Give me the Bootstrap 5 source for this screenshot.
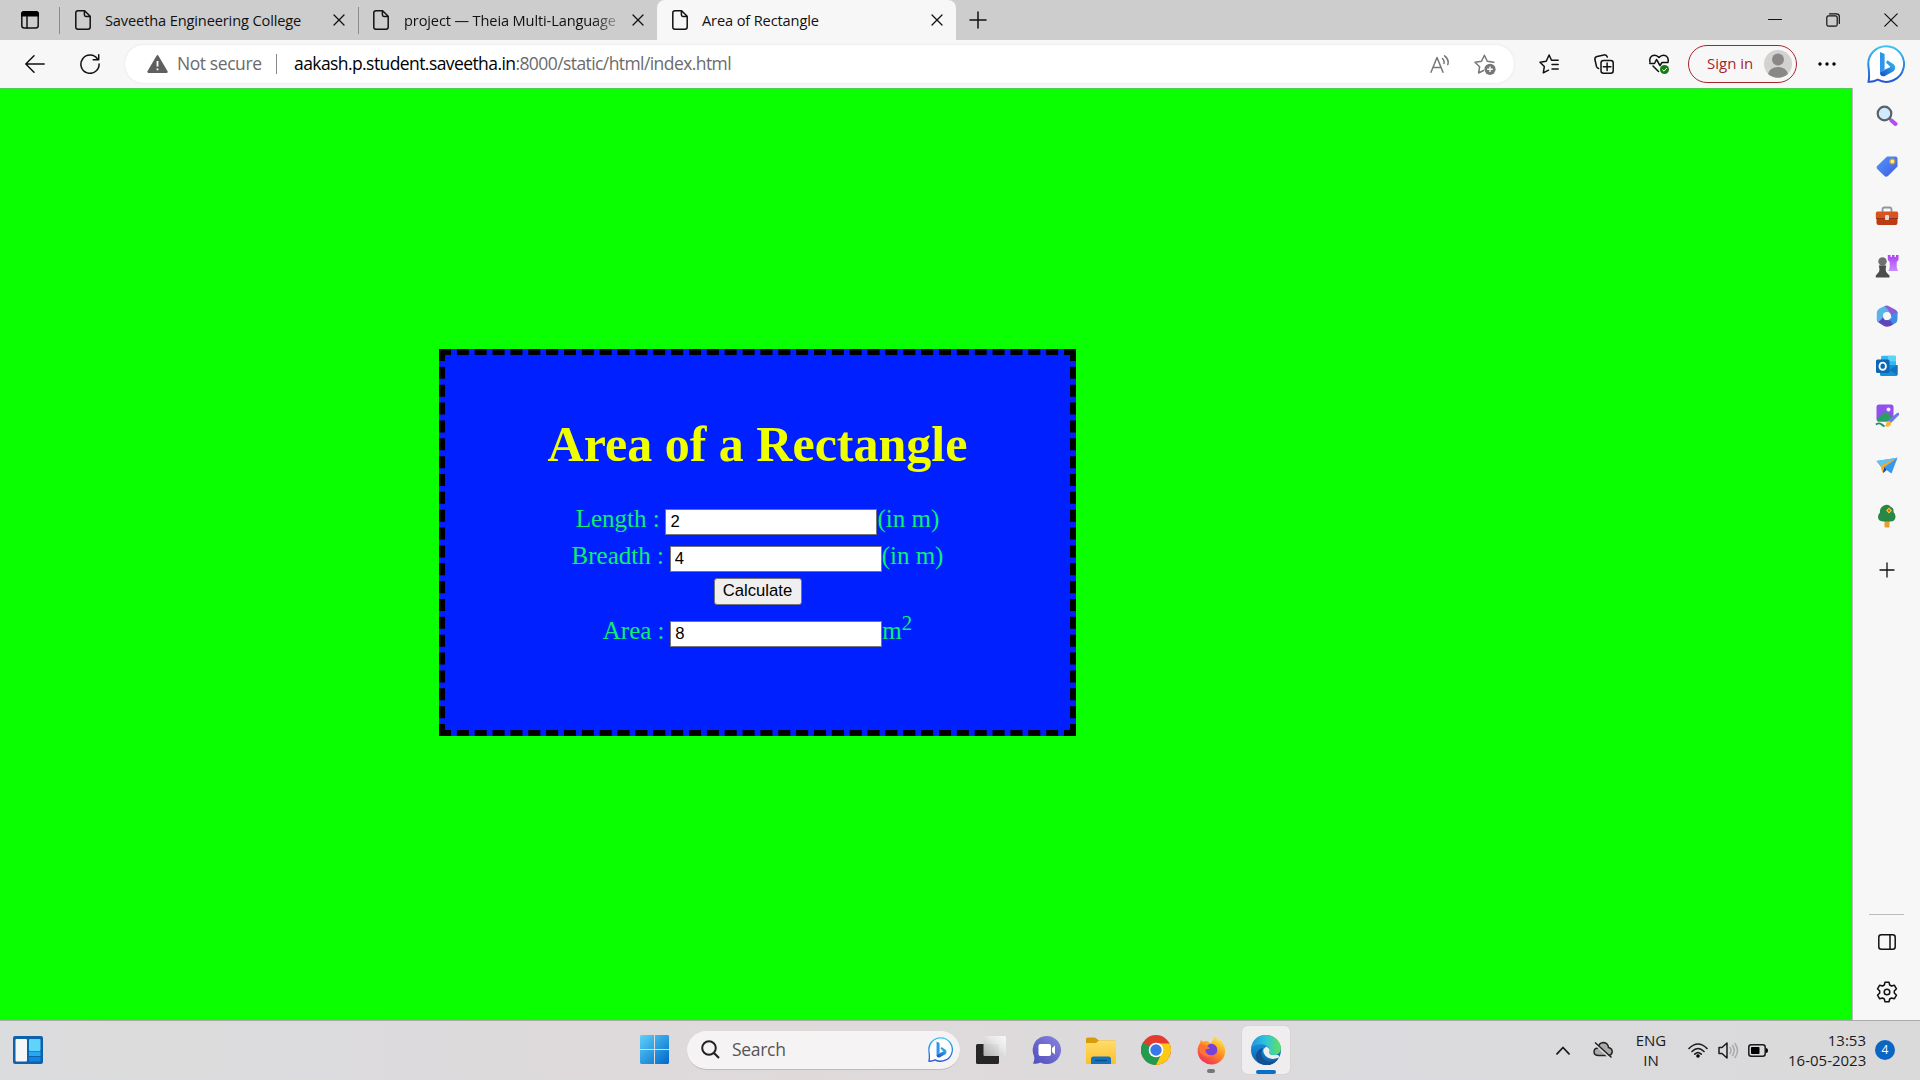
<!DOCTYPE html>
<html lang="en">
<head>
<meta charset="utf-8">
<title>Area of Rectangle</title>
<link href="https://cdn.jsdelivr.net/npm/bootstrap@5.3.0/dist/css/bootstrap.min.css" rel="stylesheet">
<style>
body{width:1920px;height:1080px;overflow:hidden;font-family:"Open Sans","Noto Sans",sans-serif;color:#111;line-height:1.2}
svg{display:block;flex:none}
.ln{fill:none;stroke:currentColor;stroke-width:1.5;stroke-linecap:round;stroke-linejoin:round}
.tabstrip{height:40px;background:#cdcdcd;font-size:14.6px;flex:none}
.tabitem{height:40px;width:299px;padding:0 13px 0 15px}
.tabitem span{flex:1;margin-left:14px;letter-spacing:-.13px;white-space:nowrap;line-height:24px}
.tabitem.divided{border-image:linear-gradient(#cdcdcd 8px,#8c8c8c 8px,#8c8c8c 33px,#cdcdcd 33px) 1;border-left:1px solid}
.tabitem.current{background:#f7f7f7;border-radius:8px 8px 0 0;padding-left:15px}
.tabitem .fade-end{-webkit-mask-image:linear-gradient(90deg,#000 88%,transparent 103%);flex:none;width:215px;margin-right:auto}
.toolbar-row{height:48px;background:#f7f7f7;flex:none}
.address{width:1389px;height:38px;border-radius:19px;background:#fff;margin-left:25px;padding-left:22px;box-shadow:0 0 3px #e4e4e4;font-size:17.5px;color:#6b6b6b;white-space:nowrap}
.address span{padding-bottom:1px}
.url{letter-spacing:-.58px;width:1137px}
.signin{width:109px;height:38px;border:1.5px solid #a4262c;border-radius:19px;color:#a4262c;font-size:15px;margin-left:19px;padding:0 4px 0 18px}
.signin span{padding-bottom:2px}
.viewport{background:#0aff00;width:1852px;border-top:1px solid #4ccf4c}
.calc{width:637px;height:387px;margin:260px 0 0 439px;border:6px dashed #000;background:#0020ff;padding-top:60.5px;font-family:"Liberation Serif",serif;font-size:25px;color:#0eee72}
.calc h1{font-size:50px;line-height:57px;font-weight:700;color:#eeff00;margin:0 0 27.5px}
.line{height:37px;line-height:37px}
.line label{margin-right:5.75px}
.field{width:212px;height:26px;padding:0 4px;border:1px solid #767676;background:#fff;color:#000;font:16.67px/24px "Liberation Sans",sans-serif;border-radius:0}
.go{width:88px;height:27px;border:1px solid #767676;border-radius:3px;background:#efefef;color:#000;font:16.67px/23px "Liberation Sans",sans-serif;padding:0 0 2px}
.calc sup{font-size:20.8px;top:-9px;line-height:0;vertical-align:baseline}
.rail{width:68px;background:#f7f7f7;border-left:1px solid #bdbdbd;padding:3px 0}
.slot{height:50px;width:67px}
.slot.low{margin-top:4px}
.rail-end{border-top:1px solid #bbb;width:35px;margin:0 auto 2px}
.taskbar{height:60px;border-top:1px solid #aaa;padding-bottom:1px;background:linear-gradient(90deg,#dbdcdd,#dcdadc 22%,#dfd9da 42%,#dedadb 52%,#dbdade 72%,#dadadb);flex:none}
.searchbox{width:273px;height:39px;border-radius:20px;background:#f5f3f4;border-bottom:1px solid #bbb;font-size:17.5px;color:#555;margin-left:17px;padding:0 7px 0 14px}
.searchbox span{flex:1;margin-left:12px;letter-spacing:-.3px}
.app{width:48px;height:48px;margin-right:7px;border-radius:5px;position:relative}
.app.open-app{background:#efedee;box-shadow:0 0 1px #aaa}
.app.running::after{content:"";position:absolute;bottom:1px;left:20px;width:8px;height:4px;border-radius:2px;background:#777}
.app.open-app::after{content:"";position:absolute;bottom:0;left:14px;width:20px;height:4px;border-radius:2px;background:#0a6fc9}
.tray{font-size:15px;line-height:20px;color:#1b1b1b}
.tray div{padding-bottom:1px}
.tray .bubble{width:20px;height:20px;background:#0a66c2;color:#fff;font-size:12px;line-height:20px;border-radius:50%;text-align:center;padding:0}
</style>
<script src="https://cdn.jsdelivr.net/npm/bootstrap@5.3.0/dist/js/bootstrap.bundle.min.js"></script>
</head>
<body class="d-flex flex-column">
<svg width="0" height="0" class="position-absolute">
<defs>
<linearGradient id="bg1" x1="0" y1="0" x2="0" y2="1"><stop offset="0" stop-color="#3bc4f5"/><stop offset="1" stop-color="#2355d4"/></linearGradient>
<linearGradient id="bg2" x1="0" y1="1" x2="1" y2="0"><stop offset="0" stop-color="#1c49c8"/><stop offset="1" stop-color="#35c4ee"/></linearGradient>
<linearGradient id="win" x1="0" y1="0" x2="1" y2="1"><stop offset="0" stop-color="#5fd0fb"/><stop offset="1" stop-color="#0067c8"/></linearGradient>
<linearGradient id="tagc" x1="0" y1="0" x2="1" y2="1"><stop offset="0" stop-color="#4f9bff"/><stop offset="1" stop-color="#4457e0"/></linearGradient>
<linearGradient id="vio" x1="0" y1="0" x2="0" y2="1"><stop offset="0" stop-color="#b03ff5"/><stop offset="1" stop-color="#c78bfb"/></linearGradient>
<linearGradient id="chat" x1="1" y1="0" x2="0" y2="1"><stop offset="0" stop-color="#8b83e0"/><stop offset="1" stop-color="#4e4fba"/></linearGradient>
<linearGradient id="fold" x1="0" y1="0" x2="0" y2="1"><stop offset="0" stop-color="#ffdc6b"/><stop offset="1" stop-color="#fbc02d"/></linearGradient>
<linearGradient id="glass" x1="0" y1="1" x2="1" y2="0"><stop offset="0" stop-color="#b5b5b5"/><stop offset=".6" stop-color="#e8e8e8"/><stop offset="1" stop-color="#fafafa"/></linearGradient>
<linearGradient id="fox" x1=".8" y1="0" x2=".2" y2="1"><stop offset="0" stop-color="#fff04a"/><stop offset=".45" stop-color="#ff9420"/><stop offset="1" stop-color="#f0245c"/></linearGradient>
<linearGradient id="edgeA" x1="0" y1=".4" x2="1" y2=".4"><stop offset="0" stop-color="#2491e0"/><stop offset=".5" stop-color="#30c6d8"/><stop offset="1" stop-color="#63e05c"/></linearGradient>
<linearGradient id="edgeB" x1="0" y1="0" x2="0" y2="1"><stop offset="0" stop-color="#1da1ea"/><stop offset="1" stop-color="#0b5fae"/></linearGradient>
<symbol id="doc" viewBox="0 0 16 20"><path class="ln" d="M2.8.8H9.6L15.2 6.2V17Q15.2 19.2 13 19.2H3Q.8 19.2.8 17V3Q.8.8 3 .8ZM9.4 1V4.8Q9.4 6.4 11 6.4H15"/></symbol>
<symbol id="cross" viewBox="0 0 12 12"><path class="ln" d="M1 1 11 11M11 1 1 11" style="stroke-width:1.3"/></symbol>
<symbol id="bing" viewBox="0 0 38 38"><path d="M19 1.2A17.8 17.8 0 1 1 10.8 34.7Q6 37.2 1.5 36.8Q2.8 31 1.3 20A17.8 17.8 0 0 1 19 1.2Z" fill="#fff" stroke="url(#bg1)" stroke-width="2"/><path d="M13 7 17.6 9V24.5L13 28Z" fill="#2d95ed"/><path d="M13 27.5 19 24 23.5 22 19 17.4 20.5 15.2 27 19.4Q29.6 23 26.5 26.2L17.5 31.2Q13 32 13 27.5Z" fill="url(#bg2)"/></symbol>
</defs></svg>

<header class="tabstrip d-flex align-items-center">
  <svg width="18" height="18" viewBox="0 0 18 18" style="margin-left:21px"><rect class="ln" x=".8" y="1" width="16.4" height="16" rx="2.5"/><path d="M0 5.5V3Q0 0 3 0H15Q18 0 18 3V5.5Z"/><path class="ln" d="M6 5V17"/></svg>
  <div class="tabitem divided d-flex align-items-center" style="margin-left:20px"><svg width="16" height="20"><use href="#doc"/></svg><span>Saveetha Engineering College</span><svg width="12" height="12"><use href="#cross"/></svg></div>
  <div class="tabitem divided d-flex align-items-center" style="padding-left:14px"><svg width="16" height="20"><use href="#doc"/></svg><span class="fade-end" style="margin-left:15px">project — Theia Multi-Language</span><svg width="12" height="12"><use href="#cross"/></svg></div>
  <div class="tabitem current d-flex align-items-center"><svg width="16" height="20"><use href="#doc"/></svg><span>Area of Rectangle</span><svg width="12" height="12"><use href="#cross"/></svg></div>
  <svg width="18" height="18" viewBox="0 0 18 18" style="margin-left:13px"><path class="ln" d="M9 1V17M1 9H17"/></svg>
  <div class="d-flex align-items-center ms-auto" style="gap:44px;margin-right:22px">
    <svg width="14" height="14" viewBox="0 0 14 14"><path class="ln" d="M.5 6.500H13.500" style="stroke-width:1.100"/></svg>
    <svg width="14" height="14" viewBox="0 0 14 14"><rect class="ln" x=".8" y="2.800" width="10.400" height="10.400" rx="1.800" style="stroke-width:1.200"/><path class="ln" d="M3.500.8H10.500Q13.300.8 13.300 3.500V10.500" style="stroke-width:1.200"/></svg>
    <svg width="14" height="14" viewBox="0 0 14 14"><path class="ln" d="M.8.8 13.200 13.200M13.200.8.8 13.200" style="stroke-width:1.200"/></svg>
  </div>
</header>

<nav class="toolbar-row d-flex align-items-center">
  <svg width="20" height="18" viewBox="0 0 20 18" style="margin-left:25px"><path class="ln" d="M19.200 9H1M9 .8 .8 9 9 17.200"/></svg>
  <svg width="20" height="20" viewBox="0 0 20 20" style="margin-left:35px"><path class="ln" d="M17.600 5.200A9.100 9.100 0 1 0 19.100 10M18.700.8V5.800H13.200"/></svg>
  <div class="address d-flex align-items-center">
    <svg width="21" height="18" viewBox="0 0 21 18"><path d="M10.500 1.200 19.600 16.800H1.400Z" fill="#5f5f5f" stroke="#5f5f5f" stroke-width="2.200" stroke-linejoin="round"/><path d="M10.500 6V11.500M10.500 13.500V15.200" stroke="#fff" stroke-width="1.800"/></svg>
    <span style="margin-left:9px;width:99px;letter-spacing:-.42px">Not secure</span>
    <span style="width:18px;height:20px;border-left:1.500px solid #8a8a8a"></span>
    <span class="url" style="width:1136px"><span class="text-black">aakash.p.student.saveetha.in</span>:8000/static/html/index.html</span>
    <svg width="20" height="18" viewBox="0 0 20 18"><path class="ln" style="color:#777" d="M1 17.200 7 2.500 13 17.200M3 12.500H11M12.500 3.500Q14.500 5.500 14 8.500M14.600.8Q19.400 4.500 17.800 9.500"/></svg>
    <svg width="22" height="21" viewBox="0 0 22 21" style="margin-left:24px;color:#777"><path class="ln" d="M9.500 16.500 4.600 19 5.600 12.800 1 8.300 7.500 7.300 10.400 1.200 13.300 7.300 19.800 8.300"/><circle cx="16" cy="15.300" r="5.600" fill="#777"/><path d="M16 12.500V18.100M13.200 15.300H18.800" stroke="#fff" stroke-width="1.400"/></svg>
  </div>
  <svg width="20" height="20" viewBox="0 0 20 20" style="margin-left:25px"><path class="ln" d="M9.500 16.200 4.300 18.800 5.300 12.600 1 8.200 7.200 7.200 10.100 1 12.500 6.200H19.200M13 10.500H19.200M13 15H19.200"/></svg>
  <svg width="20" height="20" viewBox="0 0 20 20" style="margin-left:35px"><rect class="ln" x="7" y="6.500" width="12.200" height="12.700" rx="2.500"/><path class="ln" d="M4.600 14.500Q3 14 2.500 12.500L.9 5.500Q.5 3 3 2.400L10 .9Q12.600.6 13.300 3M13.100 9V16.600M9.300 12.800H16.900"/></svg>
  <svg width="20" height="20" viewBox="0 0 20 20" style="margin-left:35px"><path class="ln" d="M1 8Q0 4 3 1.900 7 0 10 3.500 13 0 17 1.900 20 4 19 8M.8 9.500H5.500L7.500 5.500 11 11.500 13 8.500H19M4 12 9.500 17.500"/><circle cx="15.500" cy="15.500" r="4.500" fill="#107c10"/><path d="M13.300 15.500 15 17.200 17.800 14" fill="none" stroke="#fff"/></svg>
  <div class="signin d-flex align-items-center justify-content-between"><span>Sign in</span><svg width="28" height="28" viewBox="0 0 28 28"><circle cx="14" cy="14" r="14" fill="#d4d2d0"/><circle cx="14" cy="9.500" r="6" fill="#8a8886"/><path d="M4 24Q6 17 14 17T24 24Q14 31.500 4 24Z" fill="#8a8886"/></svg></div>
  <svg width="18" height="4" viewBox="0 0 18 4" style="margin-left:21px"><circle cx="2" cy="2" r="1.700"/><circle cx="9" cy="2" r="1.700"/><circle cx="16" cy="2" r="1.700"/></svg>
  <svg width="38" height="38" style="margin-left:31px"><use href="#bing"/></svg>
</nav>

<div class="d-flex flex-grow-1">
  <main class="viewport">
    <section class="calc text-center">
      <h1>Area of a Rectangle</h1>
      <div class="line d-flex justify-content-center align-items-baseline"><label>Length :</label><input class="field" value="2"><span>(in m)</span></div>
      <div class="line d-flex justify-content-center align-items-baseline"><label>Breadth :</label><input class="field" value="4"><span>(in m)</span></div>
      <div class="d-flex justify-content-center align-items-start pt-1" style="height:38px"><button class="go">Calculate</button></div>
      <div class="line d-flex justify-content-center align-items-baseline"><label>Area :</label><input class="field" value="8"><span>m<sup>2</sup></span></div>
    </section>
  </main>
  <aside class="rail d-flex flex-column">
    <div class="slot d-flex align-items-center justify-content-center"><svg width="22" height="22" viewBox="0 0 22 22"><path d="M12 12 15 15" stroke="#555" stroke-width="2"/><path d="M15.500 15.500 19.500 19" stroke="#b14df0" stroke-width="4" stroke-linecap="round"/><circle cx="8.500" cy="8.500" r="6.800" fill="#cfeaff" stroke="#5d6064" stroke-width="2.200"/></svg></div>
    <div class="slot d-flex align-items-center justify-content-center"><svg width="22" height="22" viewBox="0 0 22 22"><path d="M11 1.500H19.500Q21.500 1.500 21.500 3.500V11.500L12 21Q10 22.500 8.200 20.800L1.200 14Q0 12.200 1.400 10.700Z" fill="url(#tagc)"/><circle cx="16.300" cy="6.400" r="2.500" fill="#ffe98a" stroke="#c49b3c" stroke-width="1.200"/></svg></div>
    <div class="slot d-flex align-items-center justify-content-center"><svg width="24" height="20" viewBox="0 0 24 20"><path d="M7.500 6V3.500Q7.500 1.500 9.500 1.500H14.500Q16.500 1.500 16.500 3.500V6" fill="none" stroke="#8e979e" stroke-width="1.800"/><rect x="1.500" y="8" width="21" height="11" rx="2" fill="#bb3c13"/><rect x=".8" y="5.500" width="22.400" height="7" rx="1.500" fill="#d9531e"/><path d="M1 12.500H23" stroke="#983014"/><rect x="10" y="9" width="4" height="5" rx="1" fill="#d8dde0"/></svg></div>
    <div class="slot d-flex align-items-center justify-content-center"><svg width="24" height="24" viewBox="0 0 24 24"><path d="M12.800 1H15.500V3H17V1H19.500V3H21V1H23.500V6L21.700 8V13.500L23 17H13.500L14.700 13.500V8L12.800 6Z" fill="url(#vio)"/><circle cx="7.500" cy="7.500" r="4.200" fill="#6f6f6f"/><path d="M3.700 11.500H11.300Q9.800 17 12 19L14.500 21.500V23.500H.8V21.500L3 19Q5.500 17 3.700 11.500Z" fill="#4c4c4c"/></svg></div>
    <div class="slot d-flex align-items-center justify-content-center"><svg width="22" height="22" viewBox="0 0 22 22"><path d="M8 1.500Q10 .2 12 .8L20 5Q22 6.500 21.500 9L15.500 12 13 7.500 7.500 7Z" fill="#8c5bd6"/><path d="M21.500 7V14Q21.500 17 19 18.500L13 21.500 10.500 15.500 15.500 12.500V9.500Z" fill="#3f8be6"/><path d="M14 21Q11 22.500 8 21L2.500 17.500Q1 16.500.8 14.500L6 10 9 15 14.500 15.500 17 19.500Z" fill="#6045b8"/><path d="M.8 15V7.500Q1 5 3.500 3.500L8.500 1 13.500 6.500 7.500 8.500 6.500 13 2.500 17Z" fill="#5ab4e8"/><circle cx="11" cy="11" r="3.900" fill="#f7f7f7"/></svg></div>
    <div class="slot d-flex align-items-center justify-content-center"><svg width="22" height="22" viewBox="0 0 22 22"><rect x="5" y=".8" width="15" height="12" rx="1.500" fill="#35b8ed"/><rect x="12" y=".8" width="8" height="5.500" fill="#5bd3fa"/><path d="M4 10H21.500V19.500Q21.500 21 20 21H5.500Q4 21 4 19.500Z" fill="#148ed7"/><path d="M13 15 21.500 10V20Z" fill="#1770bd"/><rect y="4.500" width="13.500" height="13.500" rx="1.500" fill="#0c67b6"/><ellipse cx="6.700" cy="11.200" rx="3.200" ry="3.600" fill="none" stroke="#fff" stroke-width="1.900"/></svg></div>
    <div class="slot d-flex align-items-center justify-content-center"><svg width="24" height="24" viewBox="0 0 24 24"><rect x="1.500" y=".5" width="17" height="17" rx="2.500" fill="#8f50ec"/><path d="M2 14.500 8.500 9Q10.500 7.500 12.500 9L18 13.500 12 17.500H3.500Q2 17.500 2 16Z" fill="#2c9d64"/><circle cx="13.500" cy="5.500" r="2" fill="#f4e8ff"/><path d="M12.500 17 22 9Q25.500 8 24 11L15.500 19.500Z" fill="#6b78ee"/><path d="M9.500 22Q11.500 21 11.500 18.500 13.500 15.500 16 18.200 16.500 22 12.500 22.700Z" fill="#f5b62e"/><path d="M.8 20.500Q4 18.500 6 20T9.500 22.500" fill="none" stroke="#258c67" stroke-width="1.800"/></svg></div>
    <div class="slot d-flex align-items-center justify-content-center"><svg width="22" height="18" viewBox="0 0 22 18"><path d="M.5 4 21.500.8 15.500 16.500 10.500 13 7.500 16 5.500 10.500Z" fill="#3598ed"/><path d="M.5 4 21.500.8 4.500 9Z" fill="#62c2f3"/><path d="M21.500.8 4.500 8.500 6.500 16 8.500 10Z" fill="#efaa32"/><path d="M8.500 10 10.500 13 7 16Z" fill="#174e9a"/></svg></div>
    <div class="slot d-flex align-items-center justify-content-center"><svg width="20" height="24" viewBox="0 0 20 24"><rect x="7.500" y="15" width="5" height="8.500" rx="1" fill="#e99f2d"/><path d="M6 2Q11-1 14 3 17 4 16.500 8 19.500 11 18 15 16.500 18 13 17.500H6Q1 17 1 13 1 10 3 8.500 2.500 4 6 2Z" fill="#278746"/><path d="M12 3.500 15 6.500 12 9.500 9 6.500Z" fill="#ffc734"/><circle cx="12" cy="6.500" r="1.200" fill="#d66024"/></svg></div>
    <div class="slot low d-flex align-items-center justify-content-center"><svg width="16" height="16" viewBox="0 0 16 16"><path class="ln" d="M8 1V15M1 8H15" style="stroke-width:1.300"/></svg></div>
    <div class="mt-auto">
      <div class="rail-end"></div>
      <div class="slot d-flex align-items-center justify-content-center"><svg width="18" height="16" viewBox="0 0 18 16"><rect class="ln" x=".8" y=".8" width="16.400" height="14.400" rx="2.500"/><path class="ln" d="M12 1V15"/></svg></div>
      <div class="slot d-flex align-items-center justify-content-center"><svg width="22" height="22" viewBox="0 0 22 22"><path class="ln" d="M9 1.200H13L13.700 4 15.500 5 18.300 4.200 20.500 7.800 18.300 10V12L20.500 14.200 18.300 17.800 15.500 17 13.700 18 13 20.800H9L8.300 18 6.500 17 3.700 17.800 1.500 14.200 3.700 12V10L1.500 7.800 3.700 4.200 6.500 5 8.300 4Z"/><circle class="ln" cx="11" cy="11" r="2.800"/></svg></div>
    </div>
  </aside>
</div>

<footer class="taskbar d-flex align-items-center">
  <svg width="30" height="28" viewBox="0 0 30 28" style="margin-left:13px"><rect width="30" height="28" rx="2" fill="#0f62aa"/><rect x="2.500" y="3" width="11.500" height="22.500" rx="1" fill="#f5f6f8"/><rect x="16" y="3" width="11.500" height="12" rx="1" fill="#5fd3fb"/><rect x="16" y="15.500" width="11.500" height="4.500" fill="#28a8f2"/><rect x="16" y="21" width="11.500" height="4.500" rx="1" fill="#0d86e6"/></svg>
  <svg width="30" height="30" viewBox="0 0 30 30" style="margin-left:597px"><path d="M1 0H14V14H0V1ZM15 0H28L29 1V14H15ZM0 15H14V29H1L0 28ZM15 15H29V28L28 29H15Z" fill="url(#win)"/></svg>
  <div class="searchbox d-flex align-items-center"><svg width="19" height="19" viewBox="0 0 19 19"><circle cx="8" cy="8" r="6.800" fill="none" stroke="#222" stroke-width="2"/><path d="M13 13 18 18" stroke="#222" stroke-width="2.200"/></svg><span>Search</span><svg width="25" height="25"><use href="#bing"/></svg></div>
  <div class="d-flex align-items-center" style="margin-left:7px">
    <div class="app d-flex align-items-center justify-content-center"><svg width="30" height="28" viewBox="0 0 30 28"><rect y="8" width="23" height="20" rx="1.500" fill="#262626"/><rect x="7.500" width="22.500" height="20" rx="1" fill="url(#glass)" opacity=".96"/></svg></div>
    <div class="app d-flex align-items-center justify-content-center"><svg width="29" height="28" viewBox="0 0 29 28"><path d="M15 0A14 14 0 1 1 8.500 26.400Q4.500 28.500 1 27.500 3 24 2 20A14 14 0 0 1 15 0Z" fill="url(#chat)"/><rect x="6.500" y="8" width="12.500" height="12" rx="2" fill="#fff"/><path d="M20 12 23 9.500V18.500L20 16Z" fill="#fff"/></svg></div>
    <div class="app d-flex align-items-center justify-content-center"><svg width="30" height="27" viewBox="0 0 30 27"><path d="M0 2Q0 .5 1.500.5H9L13 3.500H28.500Q30 3.500 30 5V12H0Z" fill="#d99b0b"/><path d="M0 6H10L13 3.500H28.500Q30 3.500 30 5V25.500Q30 27 28.500 27H1.500Q0 27 0 25.500Z" fill="url(#fold)"/><path d="M5 27V22Q5 19.500 7.500 19.500H22.500Q25 19.500 25 22V27Z" fill="#1272bd"/><path d="M9 23.500H21" stroke="#0a4d88" stroke-width="1.300"/></svg></div>
    <div class="app d-flex align-items-center justify-content-center"><svg width="30" height="30" viewBox="0 0 30 30"><circle cx="15" cy="15" r="15" fill="#e33b2e"/><path d="M15 15 2 7.500A15 15 0 0 0 15 30L21 18.500Z" fill="#229c4c"/><path d="M15 8.500H28.500A15 15 0 0 1 15 30L20.800 18Z" fill="#fbc916"/><circle cx="15" cy="15" r="7.300" fill="#fff"/><circle cx="15" cy="15" r="5.700" fill="#3878e8"/></svg></div>
    <div class="app running d-flex align-items-center justify-content-center"><svg width="29" height="29" viewBox="0 0 29 29"><path d="M18 0Q20.500 3 22 5.500 23.500 5.500 23 3.500 28.500 9 28.200 16A13.800 13.500 0 0 1 .8 17Q0 11 3 7L4 4 6 6Q8 4.500 10.500 5L14 7.500Q16 4 18 0Z" fill="url(#fox)"/><path d="M10 10Q14 6 18.500 9.500 21.500 13 19.500 17 16 21 11 18.500 8 16 8.500 13L13 12.500Z" fill="#7541d8"/><path d="M3 8Q8 8 12 12 9 14 7 13.500Q9 20 16 19.500 8 23 3 16Z" fill="#ff7436"/></svg></div>
    <div class="app open-app d-flex align-items-center justify-content-center"><svg width="30" height="30" viewBox="0 0 30 30"><circle cx="15" cy="15" r="15" fill="url(#edgeB)"/><path d="M.3 12.500Q2.500 0 15 0 25.500 0 29.500 10 31.500 19 23 20 17 20.200 18.500 17.500 20.500 14 15.500 10.500 8 7 .3 12.500Z" fill="url(#edgeA)"/><path d="M12 13Q8 20 14 25 20 29 27.500 23.500 22 31.500 13 30 4 27.500 5 20 6.500 14 12 13Z" fill="#144f92"/><path d="M15.500 11.500Q19.700 14 18.300 17.500 17.500 20.300 23.500 20 29 19 28 22.500 20 26 14.500 21 9.500 15 15.500 11.500Z" fill="#efedee"/></svg></div>
  </div>
  <div class="tray d-flex align-items-center ms-auto">
    <svg width="14" height="9" viewBox="0 0 14 9"><path class="ln" d="M1 7.800 7 1.500 13 7.800" style="stroke-width:1.800"/></svg>
    <svg width="20" height="18" viewBox="0 0 20 18" style="margin-left:23px"><path d="M5.500 14.500Q1 14.500 1 10.500 1.500 7 5 7 6 1.500 10.500 1.500 15 2 15.500 6.500 19.300 7.500 19.200 11 18.500 14.500 15 14.500Z" fill="#aaa" stroke="#222" stroke-width="1.500"/><path d="M2 3 17 17" stroke="#ddd" stroke-width="2"/><path d="M2 1.500 18.500 16.500" stroke="#222" stroke-width="1.500"/></svg>
    <div class="text-center" style="margin-left:22px;width:32px">ENG<br>IN</div>
    <svg width="20" height="15" viewBox="0 0 20 15" style="margin-left:21px"><path class="ln" d="M1 5.500Q10-3.500 19 5.500M4 8.500Q10 2.500 16 8.500M6.800 11.200Q10 8.200 13.200 11.200" style="stroke-width:1.600"/><circle cx="10" cy="13" r="1.800"/></svg>
    <svg width="21" height="17" viewBox="0 0 21 17" style="margin-left:10px"><path class="ln" d="M1 5.500H4L9 1V16L4 11.500H1Z"/><path class="ln" d="M12 5.500Q14 8.500 12 11.500M14.500 3.500Q18 8.500 14.500 13.500M17 1.500Q22 8.500 17 15.500" style="stroke:#aaa"/></svg>
    <svg width="20" height="13" viewBox="0 0 20 13" style="margin-left:9px"><rect class="ln" x=".8" y=".8" width="16.400" height="11.400" rx="2.500"/><rect x="3" y="3" width="8.500" height="7" rx=".8"/><path d="M18 4Q20 4 20 6.500T18 9Z"/></svg>
    <div class="text-end" style="margin-left:20px;width:78px;white-space:nowrap">13:53<br>16-05-2023</div>
    <div class="bubble" style="margin:0 25px 0 9px">4</div>
  </div>
</footer>
</body>
</html>
